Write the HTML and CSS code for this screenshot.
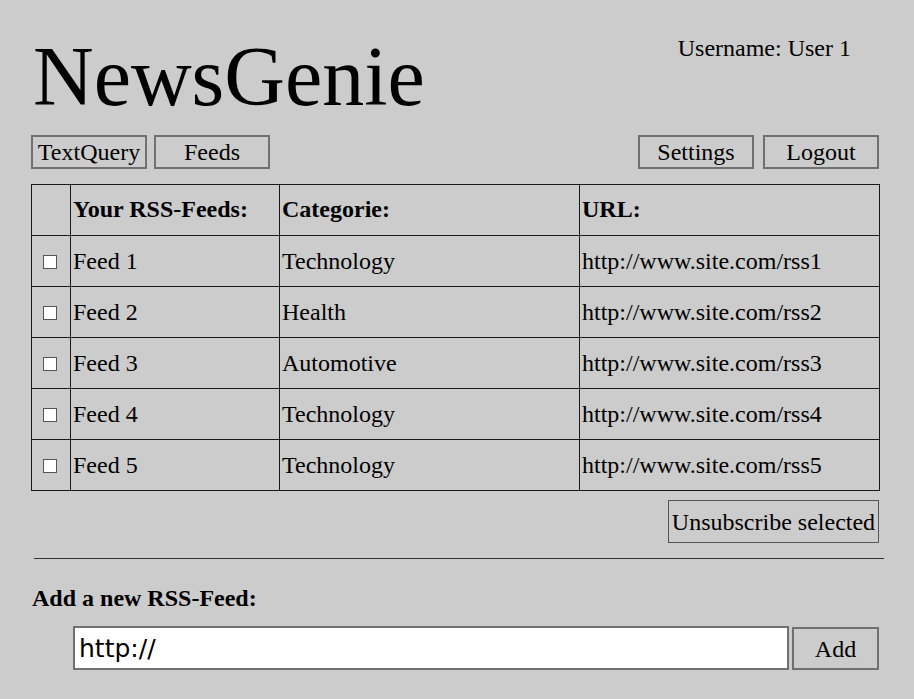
FILE: index.html
```html
<!DOCTYPE html>
<html>
<head>
<meta charset="utf-8">
<link rel="stylesheet" href="styles.css">
</head>
<body>
<div class="page">
  <header class="top">
    <h1 class="logo">NewsGenie</h1>
    <div class="user">Username: User 1</div>
  </header>
  <nav class="toolbar">
    <div class="group">
      <button class="btn">TextQuery</button>
      <button class="btn">Feeds</button>
    </div>
    <div class="group right">
      <button class="btn">Settings</button>
      <button class="btn">Logout</button>
    </div>
  </nav>
  <table class="feeds">
    <colgroup>
      <col class="c-check"><col class="c-name"><col class="c-cat"><col class="c-url">
    </colgroup>
    <thead>
      <tr><th></th><th>Your RSS-Feeds:</th><th>Categorie:</th><th>URL:</th></tr>
    </thead>
    <tbody>
      <tr><td class="chk"><input type="checkbox" class="box"></td><td>Feed 1</td><td>Technology</td><td>http://www.site.com/rss1</td></tr>
      <tr><td class="chk"><input type="checkbox" class="box"></td><td>Feed 2</td><td>Health</td><td>http://www.site.com/rss2</td></tr>
      <tr><td class="chk"><input type="checkbox" class="box"></td><td>Feed 3</td><td>Automotive</td><td>http://www.site.com/rss3</td></tr>
      <tr><td class="chk"><input type="checkbox" class="box"></td><td>Feed 4</td><td>Technology</td><td>http://www.site.com/rss4</td></tr>
      <tr><td class="chk"><input type="checkbox" class="box"></td><td>Feed 5</td><td>Technology</td><td>http://www.site.com/rss5</td></tr>
    </tbody>
  </table>
  <div class="actions">
    <button class="btn wide">Unsubscribe selected</button>
  </div>
  <hr class="sep">
  <h2 class="add-title">Add a new RSS-Feed:</h2>
  <form class="add-row">
    <input class="url-input" type="text" value="http://">
    <button class="btn add" type="button">Add</button>
  </form>
</div>
</body>
</html>
```

FILE: styles.css
```css
html, body {
  margin: 0;
  padding: 0;
  background: #cccccc;
}
body {
  font-family: "Liberation Serif", "Times New Roman", serif;
  color: #000;
  font-size: 24px;
}
.page {
  width: 848px;
  padding: 0 0 0 31px;
}
.top {
  display: flex;
  justify-content: space-between;
  align-items: flex-start;
  height: 135px;
}
.logo {
  margin: 35px 0 0 2px;
  font-weight: normal;
  font-size: 84px;
  line-height: 1;
}
.user {
  margin: 36px 28px 0 0;
  font-size: 24px;
  line-height: 1;
}
.toolbar {
  display: flex;
  justify-content: space-between;
  height: 34px;
}
.group {
  display: flex;
  gap: 7px;
}
.group.right {
  gap: 9px;
}
.btn {
  font-family: "Liberation Serif", "Times New Roman", serif;
  font-size: 24px;
  color: #000;
  background: #cccccc;
  border: 2px solid #707070;
  width: 116px;
  height: 34px;
  padding: 0;
  line-height: 1;
}
.feeds {
  margin-top: 15px;
  border-collapse: collapse;
  width: 848px;
  table-layout: fixed;
}
.c-check { width: 39px; }
.c-name { width: 209px; }
.c-cat { width: 300px; }
.c-url { width: 300px; }
.feeds th, .feeds td {
  border: 1px solid #1a1a1a;
  text-align: left;
  vertical-align: middle;
  padding: 0 0 0 2px;
  height: 50px;
  font-size: 24px;
  line-height: 1;
}
.feeds th {
  font-weight: bold;
  padding-bottom: 2px;
  height: 48px;
}
.feeds td.chk {
  padding: 0 0 0 11px;
}
.box {
  appearance: none;
  -webkit-appearance: none;
  width: 14px;
  height: 14px;
  margin: 2px 0 0 0;
  border: 1px solid #555;
  background: #fff;
  display: block;
}
.actions {
  display: flex;
  justify-content: flex-end;
  margin-top: 9px;
}
.btn.wide {
  width: 211px;
  height: 43px;
  border: 1px solid #555;
}
.sep {
  margin: 15px -5px 0 3px;
  border: none;
  border-top: 1px solid #333;
  height: 0;
}
.add-title {
  margin: 27px 0 0 1px;
  font-size: 24px;
  font-weight: bold;
  line-height: 1;
}
.add-row {
  display: flex;
  gap: 3px;
  margin: 16px 0 0 42px;
  padding: 0;
}
.url-input {
  flex: 1;
  height: 44px;
  box-sizing: border-box;
  border: 2px solid #707070;
  background: #fff;
  padding: 0 4px;
  font-family: "Comic Sans MS", "DejaVu Sans", sans-serif;
  font-size: 25px;
  color: #000;
  outline: none;
}
.btn.add {
  width: 87px;
  height: 43px;
  margin-top: 1px;
  border: 2px solid #707070;
}
```
